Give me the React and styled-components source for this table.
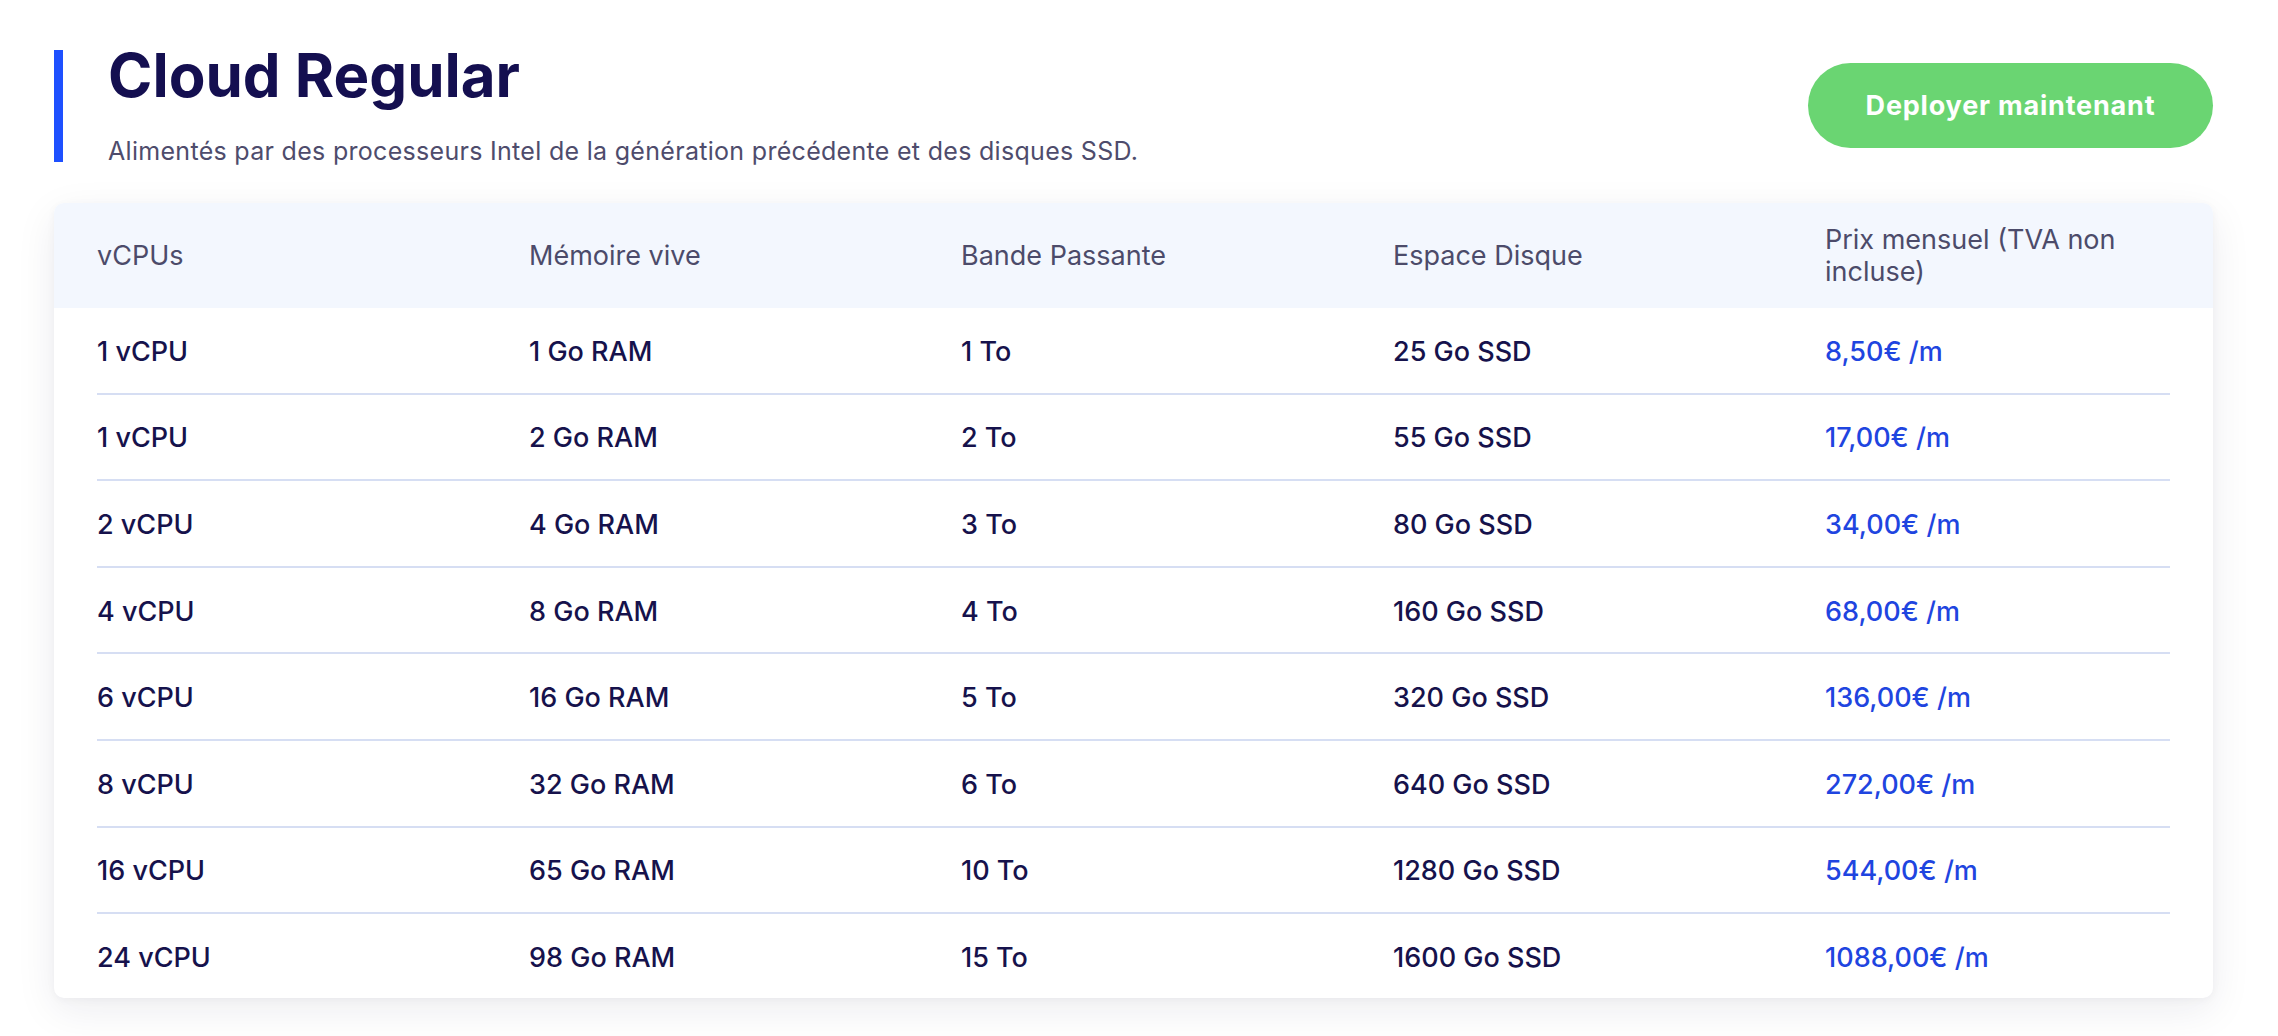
import React from "react";
import styled, { createGlobalStyle } from "styled-components";

const GlobalStyle = createGlobalStyle`
  *, *::before, *::after {
    box-sizing: border-box;
  }
  html, body {
    margin: 0;
    padding: 0;
    background: #ffffff;
  }
  body {
    font-family: Inter, "Noto Sans", sans-serif;
    -webkit-font-smoothing: antialiased;
  }
`;

const plans = [
  { cpu: "1 vCPU", ram: "1 Go RAM", bw: "1 To", disk: "25 Go SSD", price: "8,50€ /m" },
  { cpu: "1 vCPU", ram: "2 Go RAM", bw: "2 To", disk: "55 Go SSD", price: "17,00€ /m" },
  { cpu: "2 vCPU", ram: "4 Go RAM", bw: "3 To", disk: "80 Go SSD", price: "34,00€ /m" },
  { cpu: "4 vCPU", ram: "8 Go RAM", bw: "4 To", disk: "160 Go SSD", price: "68,00€ /m" },
  { cpu: "6 vCPU", ram: "16 Go RAM", bw: "5 To", disk: "320 Go SSD", price: "136,00€ /m" },
  { cpu: "8 vCPU", ram: "32 Go RAM", bw: "6 To", disk: "640 Go SSD", price: "272,00€ /m" },
  { cpu: "16 vCPU", ram: "65 Go RAM", bw: "10 To", disk: "1280 Go SSD", price: "544,00€ /m" },
  { cpu: "24 vCPU", ram: "98 Go RAM", bw: "15 To", disk: "1600 Go SSD", price: "1088,00€ /m" },
];

const headers = [
  "vCPUs",
  "Mémoire vive",
  "Bande Passante",
  "Espace Disque",
  "Prix mensuel (TVA non incluse)",
];

const App = () => {
  return (
    <Page>
      <GlobalStyle />
      <TopBar>
        <TitleBlock>
          <Title>Cloud Regular</Title>
          <Subtitle>
            Alimentés par des processeurs Intel de la génération précédente et
            des disques SSD.
          </Subtitle>
        </TitleBlock>
        <DeployButton>Deployer maintenant</DeployButton>
      </TopBar>

      <Card>
        <HeadRow>
          {headers.map((h) => (
            <HeadCell key={h}>{h}</HeadCell>
          ))}
        </HeadRow>
        <Body>
          {plans.map((p, i) => (
            <Row key={i}>
              <Cell>{p.cpu}</Cell>
              <Cell>{p.ram}</Cell>
              <Cell>{p.bw}</Cell>
              <Cell>{p.disk}</Cell>
              <Cell $price>{p.price}</Cell>
            </Row>
          ))}
        </Body>
      </Card>
    </Page>
  );
};

export default App;

//LAYOUT
const Page = styled.div`
  padding: 50px 65px 40px 54px;
`;

const TopBar = styled.div`
  display: flex;
  justify-content: space-between;
  align-items: flex-start;
`;

const TitleBlock = styled.div`
  border-left: 9px solid #1e50ff;
  padding-left: 45px;
  height: 112px;
`;

const Title = styled.h1`
  margin: 0;
  font-size: 60px;
  line-height: 50px;
  font-weight: 700;
  letter-spacing: 0;
  color: #140f50;
`;

const Subtitle = styled.p`
  margin: 38px 0 0;
  font-size: 25px;
  line-height: 26px;
  font-weight: 400;
  letter-spacing: 0.3px;
  color: #4e4c6c;
`;

const DeployButton = styled.button`
  margin-top: 13px;
  width: 405px;
  height: 85px;
  border: none;
  border-radius: 43px;
  background: #6ad572;
  color: #ffffff;
  font-family: Inter, sans-serif;
  font-size: 27px;
  font-weight: 700;
  letter-spacing: 0.8px;
  cursor: pointer;
`;

//TABLE
const Card = styled.div`
  margin-top: 41px;
  background: #ffffff;
  border-radius: 10px;
  overflow: hidden;
  box-shadow: 0 12px 40px rgba(20, 20, 60, 0.08), 0 2px 8px rgba(20, 20, 60, 0.04);
`;

const columns = "432px 432px 432px 432px 1fr";

const HeadRow = styled.div`
  display: grid;
  grid-template-columns: ${columns};
  align-items: center;
  height: 105px;
  padding: 0 43px;
  background: #f3f7fe;
`;

const HeadCell = styled.div`
  font-size: 27px;
  line-height: 32px;
  font-weight: 400;
  color: #4c4b6a;
`;

const Body = styled.div`
  padding: 0 43px;
`;

const Row = styled.div`
  display: grid;
  grid-template-columns: ${columns};
  align-items: center;
  height: 86.6px;
  padding-top: 2px;
  border-bottom: 2px solid #d6def3;

  &:last-child {
    border-bottom: none;
    height: 84px;
  }
`;

const Cell = styled.div`
  font-size: 27px;
  font-weight: 500;
  color: ${(p) => (p.$price ? "#1f45e0" : "#16124c")};
`;
